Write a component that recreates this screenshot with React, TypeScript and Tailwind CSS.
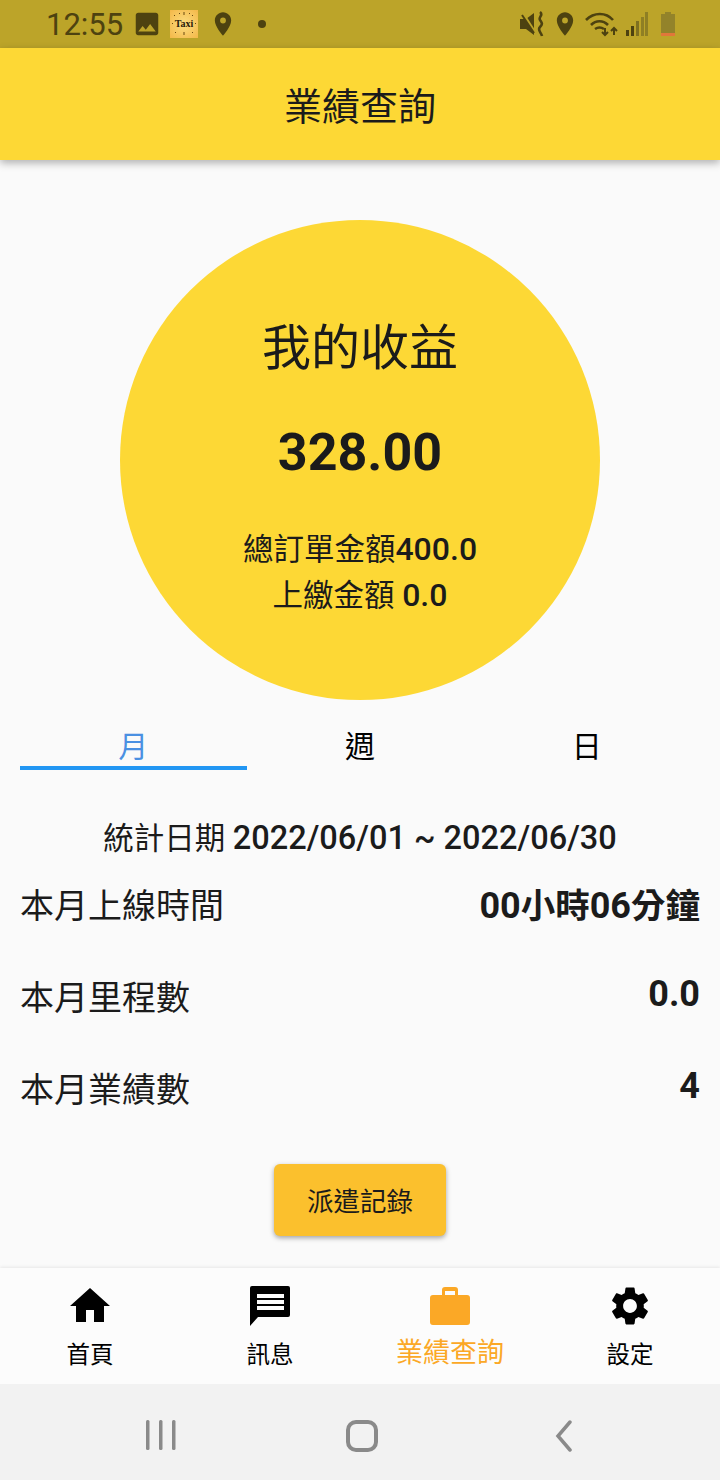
import React from 'react';
import { MdHome, MdSettings, MdImage, MdPlace } from 'react-icons/md';

const font = { fontFamily: 'Roboto, "Noto Sans CJK TC", sans-serif' };

// Barra de estado del sistema
function StatusBar() {
  return (
    <div className="flex h-12 items-center justify-between bg-[#bca429] pl-[46px] pr-[44px] text-[#4d4210]">
      <div className="flex items-center">
        <span className="w-[76px] text-[31px] leading-none">12:55</span>
        <MdImage size={30} className="ml-[10px]" />
        <div className="relative ml-[8px] flex h-[28px] w-[28px] items-center justify-center bg-[radial-gradient(circle,#fbdc80,#f4b848)] font-['Liberation_Serif',serif] text-[10px] font-bold leading-none text-[#2a1a08]">
          <svg width="28" height="28" viewBox="0 0 28 28" className="absolute inset-0" fill="#6b4a10">
            <path d="M13.5 2h1v3h-1zM13.5 22h1v3h-1zM4 5h1v1H4zM22 5h1v1h-1zM5 22h1v1H5zM22 22h1v1h-1zM9 3h1v1H9zM19 3h1v1h-1zM2 13h1v1H2zM25 13h1v1h-1z" />
          </svg>
          Taxi
        </div>
        <MdPlace size={28} className="ml-[11px]" />
        <div className="ml-[21px] h-2 w-2 rounded-full bg-[#4d4210]" />
      </div>
      <div className="flex items-center">
        <svg width="26" height="26" viewBox="0 0 26 26" fill="currentColor">
          <path d="M0 8h6l8-6v22l-8-6H0z" />
          <path d="M1 2l2-2 14 22-2 2z" fill="#bca429" />
          <path d="M2 4l12 18" stroke="currentColor" strokeWidth="2" />
          <path d="M20 1c4 3-2 5 0 8s3 4 0 7 1 5 2 9" fill="none" stroke="currentColor" strokeWidth="2.6" />
        </svg>
        <MdPlace size={28} className="ml-[5px]" />
        <svg width="34" height="26" viewBox="0 0 34 26" className="ml-[6px]" fill="none" stroke="currentColor" strokeWidth="2.6">
          <path d="M1 9c8-8 20-8 27 0" />
          <path d="M6 14c5-5 12-5 17 0" />
          <path d="M10 18c3-2 6-2 9 0" />
          <path d="M20 17v7M17 21l3 3 3-3M29 24v-7M26 20l3-3 3 3" strokeWidth="2" />
        </svg>
        <svg width="22" height="24" viewBox="0 0 22 24" className="ml-[7px]">
          <rect x="0" y="18" width="3" height="6" fill="#4d4210" />
          <rect x="5" y="14" width="3" height="10" fill="#4d4210" />
          <rect x="10" y="9" width="3" height="15" fill="#7f7020" />
          <rect x="15" y="5" width="3" height="19" fill="#8f7f24" />
          <rect x="19" y="0" width="3" height="24" fill="#8f7f24" />
        </svg>
        <svg width="16" height="24" viewBox="0 0 16 24" className="ml-[12px]">
          <path d="M5 0h6v2h4v22H1V2h4z" fill="#93832a" />
          <rect x="1" y="21" width="14" height="3" fill="#e0773a" />
        </svg>
      </div>
    </div>
  );
}

function StatRow({ label, value, up }: { label: string; value: React.ReactNode; up?: boolean }) {
  return (
    <div className="flex h-[92px] items-center justify-between">
      <span className="text-[34px] text-[#1b1b1b]">{label}</span>
      <span className={`text-[34.5px] font-bold text-[#1b1b1b] ${up ? 'mb-2' : ''}`}>{value}</span>
    </div>
  );
}

function NavItem({ icon, label, active }: { icon: React.ReactNode; label: string; active?: boolean }) {
  return (
    <div className="flex w-[180px] flex-col items-center pt-[12px]">
      <div className="flex h-[52px] items-center">{icon}</div>
      <span className={active ? 'mt-[2px] text-[27px] leading-[38px] text-[#fba826]' : 'mt-[6px] text-[23.5px] leading-[34px] text-black'}>{label}</span>
    </div>
  );
}

export default function App() {
  return (
    <div style={font} className="flex h-[1480px] w-[720px] flex-col overflow-hidden bg-[#fafafa]">
      <StatusBar />
      <header className="flex h-[112px] items-center justify-center bg-[#fdd835] pt-[6px] shadow-[0_3px_8px_rgba(0,0,0,0.3)]">
        <h1 className="text-[38px] font-normal text-[#1b1b1b]">業績查詢</h1>
      </header>

      <main className="flex flex-1 flex-col px-5">
        <div className="mx-auto mt-[60px] flex h-[480px] w-[480px] flex-col items-center rounded-full bg-[#fdd835] text-[#1b1b1b]">
          <div className="mt-[94px] text-[49px] leading-[70px]">我的收益</div>
          <div className="mt-[39px] text-[52px] font-bold leading-[60px]">328.00</div>
          <div className="mt-[43px] text-[30.5px] leading-[46px]">總訂單金額<span className="text-[32px] font-medium">400.0</span></div>
          <div className="-mt-px text-[30.5px] leading-[46px]">上繳金額 <span className="text-[32px] font-medium">0.0</span></div>
        </div>

        <div className="mt-[28px] grid grid-cols-3">
          <div className="h-[42px] border-b-4 border-[#2196f3] text-center text-[30px] leading-[38px] text-[#4a90e2]">月</div>
          <div className="h-[42px] text-center text-[30px] leading-[38px] text-black">週</div>
          <div className="h-[42px] text-center text-[30px] leading-[38px] text-black">日</div>
        </div>

        <div className="mt-[46px] text-center text-[30.5px] leading-[44px] text-[#1b1b1b]">統計日期 <span className="text-[32.5px] font-medium">2022/06/01 ~ 2022/06/30</span></div>

        <div className="-mt-px">
          <StatRow label="本月上線時間" value={<><span className="text-[36px]">00</span>小時<span className="text-[36px]">06</span>分鐘</>} />
          <StatRow label="本月里程數" value={<span className="text-[36px]">0.0</span>} up />
          <StatRow label="本月業績數" value={<span className="text-[36px]">4</span>} up />
        </div>

        <button className="mx-auto mt-[28px] h-[72px] w-[172px] rounded-md bg-[#fbc02d] pt-1 text-[26.5px] text-[#1b1b1b] shadow-[0_2px_5px_rgba(0,0,0,0.35)]">派遣記錄</button>
      </main>

      <nav className="flex h-[116px] bg-[#fcfcfc] shadow-[0_-1px_3px_rgba(0,0,0,0.08)]">
        <NavItem icon={<MdHome size={48} className="text-black" />} label="首頁" />
        <NavItem
          label="訊息"
          icon={
            <svg width="40" height="40" viewBox="0 0 40 40" fill="#000">
              <path d="M2 0h36a2 2 0 0 1 2 2v27a2 2 0 0 1-2 2H8l-8 9V2a2 2 0 0 1 2-2z" />
              <path d="M7 8h27v4H7zM7 14h27v4H7zM7 20h27v4H7z" fill="#fcfcfc" />
            </svg>
          }
        />
        <NavItem
          active
          label="業績查詢"
          icon={
            <svg width="40" height="38" viewBox="0 0 40 38" fill="#fba826">
              <path fillRule="evenodd" d="M12 8V3a3 3 0 0 1 3-3h10a3 3 0 0 1 3 3v5h9a3 3 0 0 1 3 3v24a3 3 0 0 1-3 3H3a3 3 0 0 1-3-3V11a3 3 0 0 1 3-3zm3 0h10V4H15z" />
            </svg>
          }
        />
        <NavItem icon={<MdSettings size={46} className="text-black" />} label="設定" />
      </nav>

      <div className="flex h-24 items-center bg-[#f2f2f2] pt-2 text-[#8a8a8a]">
        <div className="flex w-[322px] justify-center">
          <svg width="30" height="32" viewBox="0 0 30 32" fill="currentColor">
            <rect x="0" y="0" width="3.5" height="30" rx="1.5" />
            <rect x="13" y="0" width="3.5" height="30" rx="1.5" />
            <rect x="26" y="0" width="3.5" height="30" rx="1.5" />
          </svg>
        </div>
        <div className="flex w-[80px] justify-center">
          <div className="h-[32px] w-[32px] rounded-[10px] border-[4px] border-[#8a8a8a]" />
        </div>
        <div className="flex w-[318px] justify-center pl-[6px]">
          <svg width="18" height="32" viewBox="0 0 18 32" fill="none" stroke="currentColor" strokeWidth="3.5" strokeLinecap="round">
            <path d="M15 2 3 16l12 14" />
          </svg>
        </div>
      </div>
    </div>
  );
}
